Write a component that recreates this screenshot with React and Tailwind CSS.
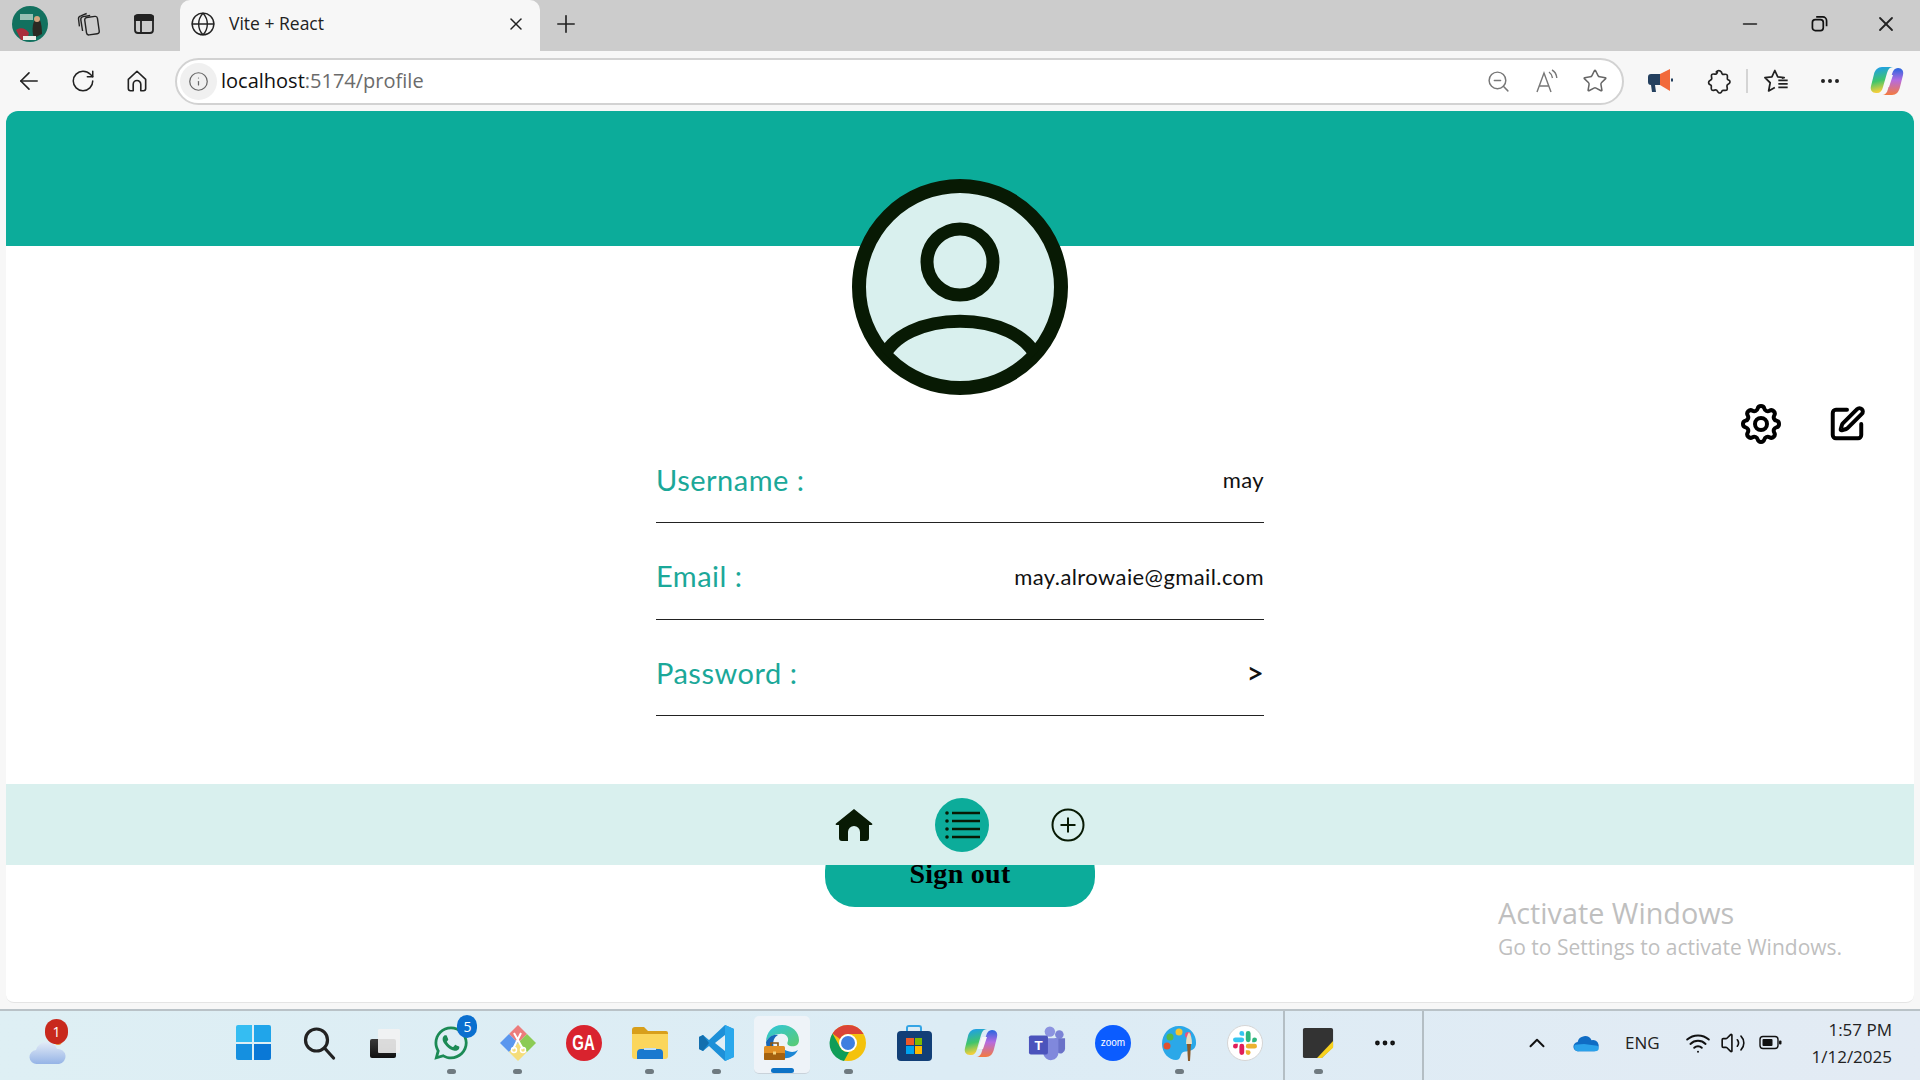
import { ArrowLeft, RotateCw, Info, ZoomOut, Star, Ellipsis, X, Plus, Minus, Globe, SquarePen, ChevronUp, Wifi, Volume2 } from "lucide-react";
import { TbSettings } from "react-icons/tb";
import { FaWhatsapp } from "react-icons/fa";

const rows = [
  { label: "Username :", value: "may", h: "h-[96px]", cls: "text-[22px] tracking-[0.4px]" },
  { label: "Email :", value: "may.alrowaie@gmail.com", h: "h-[97px]", cls: "text-[22px] tracking-[0.4px]" },
  { label: "Password :", value: ">", h: "h-[96px]", cls: "text-[30px] font-semibold" },
];

function Avatar() {
  return (
    <svg viewBox="0 0 36 36" className="w-9 h-9">
      <circle cx="18" cy="18" r="18" fill="#12715f" />
      <rect x="8" y="8" width="13" height="6" fill="#cfe3d7" opacity="0.7" />
      <path d="M22 32c-3-8-1-19 3-20s5 10 5 16z" fill="#2b2a22" />
      <circle cx="25" cy="13" r="3" fill="#d5a67f" />
      <path d="M4 24c4-3 10-2 13 3l-2 7H9z" fill="#a92d3b" />
      <rect x="11" y="30" width="13" height="4" fill="#ecece6" />
    </svg>
  );
}

function Tabs() {
  return (
    <svg viewBox="0 0 24 24" className="w-[28px] h-[28px]" fill="none" stroke="#222" strokeWidth="1.2">
      <rect x="9" y="6" width="11" height="15" rx="2" transform="rotate(-8 14 13)" />
      <path d="M6.500 18 5 8.500A2.500 2.500 0 0 1 7 5.700l6-1" />
      <path d="M3.800 14 3 7.500A2.500 2.500 0 0 1 5 5l5-2" />
    </svg>
  );
}

function VerticalTabs() {
  return (
    <svg viewBox="0 0 24 24" className="w-6 h-6" fill="none" stroke="#222" strokeWidth="1.800">
      <rect x="3" y="3" width="18" height="18" rx="3" />
      <path d="M3 4.500h18V8H3z" fill="#222" />
      <path d="M9 8v13" />
    </svg>
  );
}

function HomeOutline() {
  return (
    <svg viewBox="0 0 24 24" className="w-[26px] h-[26px]" fill="none" stroke="#222" strokeWidth="1.500" strokeLinejoin="round">
      <path d="M4 10.500 12 3l8 7.500V19a2 2 0 0 1-2 2h-2.500v-6a3.500 3.500 0 0 0-7 0v6H6a2 2 0 0 1-2-2z" />
    </svg>
  );
}

function ReadAloud() {
  return (
    <svg viewBox="0 0 26 26" className="w-[26px] h-[26px]" fill="none" stroke="#777" strokeWidth="1.400">
      <path d="M3 24 10 5l7 19M5.500 18h9" />
      <path d="M15 4c2 1.300 3 3.500 3.500 6M18 2c3 1.500 4.500 5 4.800 8" />
    </svg>
  );
}

function Megaphone() {
  return (
    <svg viewBox="0 0 28 28" className="w-7 h-7">
      <path d="M2 10a3 3 0 0 1 3-3h9v11H9l1 7H6l-1-7a3 3 0 0 1-3-3z" fill="#24405f" />
      <path d="M14 7 24 2v22l-10-6z" fill="#f26a3b" />
      <rect x="25" y="11.500" width="2" height="3" fill="#24405f" />
    </svg>
  );
}

function ExtensionIcon() {
  return (
    <svg viewBox="0 0 24 24" className="w-[27px] h-[27px]" fill="none" stroke="#222" strokeWidth="1.500" strokeLinejoin="round">
      <path d="M10 3.500c1-1.500 3.500-1.500 4.500 0 .5.800.3 1.500 1 2 .8.500 3-.5 4 .5s0 3 .5 4c.4.700 1.500.5 2 1.500.6 1.200-.2 2.500-1.500 3-.6.300-1 .7-1 1.500 0 1 .8 2.500 0 3.500-1 1-3 0-4 .5-.7.400-.5 1.500-1.500 2-1.200.6-2.500-.2-3-1.500-.3-.7-.8-1-1.500-1-1 0-2.500.8-3.500 0-1-1 0-3-.5-4-.4-.7-1.500-.6-2-1.500-.7-1.300 0-2.600 1.300-3.200.7-.3 1.200-.7 1.200-1.500 0-1-.8-2.500 0-3.500 1-1 3 0 4-.5.700-.3.500-.9 1-1.300z" />
    </svg>
  );
}

function FavoritesIcon() {
  return (
    <svg viewBox="0 0 24 24" className="w-[28px] h-[28px]" fill="none" stroke="#222" strokeWidth="1.500" strokeLinejoin="round">
      <path d="m17 9.500 2-.3-5.500-.7L11 3 8.500 8.500 2.500 9.200l4.500 4.300-1.300 7 5.300-3" />
      <path d="M14 11.500h8M14 14.500h8M14 17.500h8" />
    </svg>
  );
}

function CopilotMark({ id = "cp", size = 34 }) {
  return (
    <svg viewBox="0 0 34 34" style={{ width: size, height: size }}>
      <defs>
        <linearGradient id={`${id}A`} x1="0.4" y1="0" x2="0.6" y2="1">
          <stop offset="0" stopColor="#1f9fe8" />
          <stop offset="0.5" stopColor="#3fc56b" />
          <stop offset="0.9" stopColor="#f2cf3b" />
        </linearGradient>
        <linearGradient id={`${id}B`} x1="0.5" y1="0" x2="0.5" y2="1">
          <stop offset="0" stopColor="#2567e0" />
          <stop offset="0.45" stopColor="#b56be0" />
          <stop offset="1" stopColor="#f47a3f" />
        </linearGradient>
      </defs>
      <path d="M12 3h11c-3 0-5 2-6 6l-4 14c-1 4-3 6-6 6H6c-4 0-6-3-5-7l3-12C5 6 8 3 12 3z" fill={`url(#${id}A)`} />
      <path d="M22 31H12c3 0 5-2 6-6l4-15c1-4 3-6 6-6 4 0 6 3 5 7l-3 12c-1 5-4 8-8 8z" fill={`url(#${id}B)`} />
      <path d="M18 11h5l-4 12h-5z" fill="#f7f7f7" />
    </svg>
  );
}

function Windows() {
  return (
    <div className="grid grid-cols-2 gap-[2px] w-[35px] h-[35px]">
      <div className="bg-[#35bdf2] rounded-tl-[2px]" />
      <div className="bg-[#20a5ea] rounded-tr-[2px]" />
      <div className="bg-[#1590e0] rounded-bl-[2px]" />
      <div className="bg-[#0a78d6] rounded-br-[2px]" />
    </div>
  );
}

function Search() {
  return (
    <svg viewBox="0 0 34 34" className="w-[34px] h-[34px]" fill="none" stroke="#222" strokeWidth="3.200" strokeLinecap="round">
      <circle cx="14.500" cy="14" r="11" />
      <path d="m22.500 22 9 10" />
    </svg>
  );
}

function TaskView() {
  return (
    <svg viewBox="0 0 34 34" className="w-[34px] h-[34px]">
      <defs>
        <linearGradient id="tvA" x1="0" y1="0" x2="0" y2="1">
          <stop offset="0" stopColor="#3a3a3a" />
          <stop offset="1" stopColor="#111" />
        </linearGradient>
      </defs>
      <rect x="2" y="13" width="26" height="19" rx="2" fill="url(#tvA)" />
      <rect x="10" y="3" width="22" height="24" rx="1" fill="#f2f2f2" opacity="0.88" />
    </svg>
  );
}

function Kite() {
  return (
    <svg viewBox="0 0 38 38" className="w-[38px] h-[38px]">
      <path d="M19 1 28 10 19 19 10 10z" fill="#ec7c7c" />
      <path d="M10 10 19 19 10 28 1 19z" fill="#5b97ee" />
      <path d="M28 10 37 19 28 28 19 19z" fill="#8ccb55" />
      <path d="M19 19 28 28 19 37 10 28z" fill="#f5dd7a" />
      <path d="M15 9 24 25M22 9l-8 16" stroke="#fff" strokeWidth="2" />
      <circle cx="15" cy="26" r="2.500" fill="none" stroke="#fff" strokeWidth="1.500" />
      <circle cx="24" cy="26" r="2.500" fill="none" stroke="#fff" strokeWidth="1.500" />
    </svg>
  );
}

function Folder() {
  return (
    <svg viewBox="0 0 38 36" className="w-[38px] h-[36px]">
      <path d="M1 5a3 3 0 0 1 3-3h9l4 4h18a2 2 0 0 1 2 2v4H1z" fill="#d89f1b" />
      <path d="M1 9h36v22a3 3 0 0 1-3 3H4a3 3 0 0 1-3-3z" fill="#fbd65c" />
      <path d="M6 34v-6a4 4 0 0 1 4-4h18a4 4 0 0 1 4 4v6z" fill="#1a79cf" />
      <rect x="13" y="23" width="12" height="2" fill="#bfe0f7" />
    </svg>
  );
}

function VSCode() {
  return (
    <svg viewBox="0 0 38 38" className="w-[38px] h-[38px]">
      <path d="M28 1 37 5v28l-9 4L12 22l-6 5-4-2V13l4-2 6 5z" fill="#1d90d8" />
      <path d="M28 1 37 5v28l-9 4z" fill="#2aa8ec" />
      <path d="M28 11 18 19l10 8z" fill="#e2eff6" />
      <path d="M2 13v12l4 2 6-8-6-8z" fill="#146fae" />
    </svg>
  );
}

function Edge() {
  return (
    <svg viewBox="0 0 38 38" className="w-[38px] h-[38px]">
      <defs>
        <linearGradient id="edA" x1="0" y1="0" x2="1" y2="1">
          <stop offset="0" stopColor="#2dc6e0" />
          <stop offset="1" stopColor="#5ccb6e" />
        </linearGradient>
      </defs>
      <path d="M3 18C3 8 10 1 19 1c10 0 17 7 17 15 0 6-5 7-9 6-3-1-3-3-2-5 1-4-3-8-8-7-6 0-12 3-14 8z" fill="url(#edA)" />
      <path d="M3 18c3-6 8-8 12-7-4 2-6 7-4 13 1 4 4 8 9 10-9 1-17-6-17-16z" fill="#1866b8" />
      <path d="M20 34c6 1 12-2 15-8-4 3-9 2-13 0-3 1-4 6-2 8z" fill="#1c86d4" />
      <rect x="1" y="22" width="21" height="14" rx="1.500" fill="#e08f25" />
      <rect x="1" y="29" width="21" height="7" rx="1" fill="#a4620f" />
      <path d="M8 22v-3h7v3" fill="none" stroke="#8a5510" strokeWidth="1.600" />
      <rect x="10" y="27.500" width="3" height="3" fill="#f3d27a" />
    </svg>
  );
}

function Chrome() {
  return (
    <svg viewBox="0 0 38 38" className="w-[38px] h-[38px]">
      <circle cx="19" cy="19" r="18" fill="#f4c20d" />
      <path d="M19 1a18 18 0 0 1 15.600 9H19a9 9 0 0 0-8 5L3.500 9.500A18 18 0 0 1 19 1z" fill="#db4437" />
      <path d="M3.500 9.500 11 23a9 9 0 0 0 9 5l-5 9A18 18 0 0 1 3.500 9.500z" fill="#0f9d58" />
      <circle cx="19" cy="19" r="9" fill="#fff" />
      <circle cx="19" cy="19" r="7" fill="#3f7fe0" />
    </svg>
  );
}

function Store() {
  return (
    <div className="flex flex-col items-center">
      <div className="w-[16px] h-[6px] border-2 border-b-0 border-[#35a5e5] rounded-t-[3px]" />
      <div className="w-[35px] h-[30px] rounded-[4px] bg-[#123f77] flex items-center justify-center">
        <div className="grid grid-cols-2 gap-[1px] w-[16px] h-[16px]">
          <div className="bg-[#ef5a28]" />
          <div className="bg-[#7fba00]" />
          <div className="bg-[#00a4ef]" />
          <div className="bg-[#ffb900]" />
        </div>
      </div>
    </div>
  );
}

function Teams() {
  return (
    <svg viewBox="0 0 40 36" className="w-[38px] h-[36px]">
      <circle cx="33" cy="9" r="4.500" fill="#7b83d6" />
      <circle cx="23" cy="6" r="5.500" fill="#8c93e0" />
      <path d="M28 13h11v11a5 5 0 0 1-8 4z" fill="#6a72c8" />
      <path d="M12 13h20v14a8 8 0 0 1-16 2z" fill="#8088dc" />
      <rect x="1" y="10" width="20" height="20" rx="2" fill="#4b53bc" />
      <text x="11" y="25" textAnchor="middle" fontFamily="'Liberation Sans',sans-serif" fontWeight="700" fontSize="14" fill="#fff">T</text>
    </svg>
  );
}

function Zoom() {
  return (
    <div className="w-[36px] h-[36px] rounded-full bg-[#0b5cff] flex items-center justify-center text-white text-[10px] font-['Liberation_Sans',sans-serif]">zoom</div>
  );
}

function Paint() {
  return (
    <svg viewBox="0 0 38 38" className="w-[38px] h-[38px]">
      <path d="M19 2C9 2 2 10 2 20c0 9 7 16 14 16 5 0 4-5 6-7 3-3 13 0 14-9C37 10 29 2 19 2z" fill="#2ba8e8" />
      <circle cx="19" cy="8" r="3.500" fill="#f4c430" />
      <circle cx="10" cy="13" r="3.500" fill="#57b947" />
      <circle cx="7" cy="22" r="3.500" fill="#e2502f" />
      <circle cx="28" cy="11" r="3" fill="#e75480" />
      <path d="M27 20h4l-1 17h-2z" fill="#8a5a2b" />
      <path d="M26 20c0-5 1-9 3-12 2 3 3 7 3 12z" fill="#e8dcc0" />
    </svg>
  );
}

function Slack() {
  return (
    <div className="w-[36px] h-[36px] rounded-full bg-white border border-[#d5d5d5] flex items-center justify-center">
      <svg viewBox="0 0 54 54" className="w-[24px] h-[24px]">
        <path d="M19.700 0a5.400 5.400 0 1 0 0 10.800h5.400V5.400A5.400 5.400 0 0 0 19.700 0zm0 14.400H5.400a5.400 5.400 0 1 0 0 10.800h14.300a5.400 5.400 0 1 0 0-10.800z" fill="#36c5f0" />
        <path d="M54 19.800a5.400 5.400 0 1 0-10.800 0v5.400h5.400a5.400 5.400 0 0 0 5.400-5.400zm-14.400 0V5.400a5.400 5.400 0 1 0-10.800 0v14.400a5.400 5.400 0 1 0 10.800 0z" fill="#2eb67d" />
        <path d="M34.200 54a5.400 5.400 0 1 0 0-10.800h-5.400v5.400a5.400 5.400 0 0 0 5.400 5.400zm0-14.400h14.400a5.400 5.400 0 1 0 0-10.800H34.200a5.400 5.400 0 1 0 0 10.800z" fill="#ecb22e" />
        <path d="M0 34.200a5.400 5.400 0 1 0 10.800 0v-5.400H5.400A5.400 5.400 0 0 0 0 34.200zm14.400 0v14.400a5.400 5.400 0 1 0 10.800 0V34.200a5.400 5.400 0 1 0-10.800 0z" fill="#e01e5a" />
      </svg>
    </div>
  );
}

function Sticky() {
  return (
    <svg viewBox="0 0 34 34" className="w-[34px] h-[32px]">
      <path d="M1 3a2 2 0 0 1 2-2h28a2 2 0 0 1 2 2v18L21 33H3a2 2 0 0 1-2-2z" fill="#333" />
      <path d="M33 15v7L21 33h-5z" fill="#f8d21f" />
    </svg>
  );
}

function WeatherCloud() {
  return (
    <div className="relative w-[40px] h-[44px]">
      <svg viewBox="0 0 40 30" className="absolute bottom-0 left-0 w-[40px] h-[30px]">
        <defs>
          <linearGradient id="clA" x1="0" y1="0" x2="0" y2="1">
            <stop offset="0" stopColor="#e3ebf7" />
            <stop offset="1" stopColor="#95b4e6" />
          </linearGradient>
        </defs>
        <circle cx="30" cy="6" r="4" fill="#ea8a2a" />
        <path d="M9 29a7 7 0 0 1-1-14 11 11 0 0 1 21-1 7.500 7.500 0 0 1 2 15z" fill="url(#clA)" />
      </svg>
      <div className="absolute top-[-2px] left-[17px] w-[23px] h-[25px] rounded-full bg-[#c8291d] text-white text-[14px] flex items-center justify-center">1</div>
    </div>
  );
}

function OneDrive() {
  return (
    <svg viewBox="0 0 28 18" className="w-[26px] h-[18px]">
      <path d="M6 18a5 5 0 0 1-1-10 8 8 0 0 1 15-2 6 6 0 0 1 3 12z" fill="#0f6cc4" />
      <path d="M6 18c-4 0-6-4-4-7l10-1 14 2c3 2 2 6-2 6z" fill="#2aa1ea" />
    </svg>
  );
}

function Battery() {
  return (
    <svg viewBox="0 0 24 14" className="w-[24px] h-[15px]">
      <rect x="1" y="1" width="18" height="12" rx="3" fill="none" stroke="#111" strokeWidth="1.400" />
      <rect x="3.500" y="3.500" width="10" height="7" rx="1" fill="#111" />
      <rect x="20" y="5" width="2.500" height="4" rx="1" fill="#111" />
    </svg>
  );
}

function TaskIcon({ children, dot, active, badge }) {
  return (
    <div className="relative w-[66.15px] h-[70px] shrink-0 flex items-center justify-center">
      {active && <div className="absolute inset-x-[5px] top-[5px] bottom-[7px] rounded-[5px] bg-[#eef3f8] border-b border-[#c9d2da]" />}
      <div className="relative mb-[7px]">
        {children}
        {badge && <div className="absolute -top-[9px] -right-[7px] w-[20px] h-[23px] rounded-full bg-[#0a6fcf] text-white text-[14px] flex items-center justify-center">{badge}</div>}
      </div>
      {dot && <div className="absolute bottom-[7px] w-[9px] h-[5px] rounded-full bg-[#6f7a80]" />}
      {active && <div className="absolute bottom-[8px] w-[23px] h-[5px] rounded-full bg-[#0c72c6]" />}
    </div>
  );
}

function HomeIcon() {
  return (
    <svg viewBox="0 0 38 34" className="w-[38px] h-[34px]">
      <path d="M19 1 37 15.500c.8.700.3 1.500-.5 1.500H34v13a3 3 0 0 1-3 3h-6V24a6 6 0 0 0-12 0v9H7a3 3 0 0 1-3-3V17H1.500c-.8 0-1.300-.8-.5-1.500z" fill="#081a04" />
    </svg>
  );
}

function ListIcon() {
  return (
    <svg viewBox="0 0 36 30" className="w-[36px] h-[30px]" fill="none" stroke="#081a04" strokeWidth="2.400">
      <circle cx="3" cy="3" r="1.800" fill="#081a04" stroke="none" />
      <circle cx="3" cy="11" r="1.800" fill="#081a04" stroke="none" />
      <circle cx="3" cy="19" r="1.800" fill="#081a04" stroke="none" />
      <circle cx="3" cy="27" r="1.800" fill="#081a04" stroke="none" />
      <path d="M8 3h28M8 11h28M8 19h28M8 27h28" />
    </svg>
  );
}

function AddIcon() {
  return (
    <svg viewBox="0 0 34 34" className="w-[34px] h-[34px]" fill="none" stroke="#081a04" strokeWidth="2">
      <circle cx="17" cy="17" r="15.500" />
      <path d="M17 9.500v15M9.500 17h15" />
    </svg>
  );
}

function ProfileAvatar() {
  return (
    <svg viewBox="0 0 216 216" className="w-[216px] h-[216px]">
      <defs>
        <clipPath id="avClip">
          <circle cx="108" cy="108" r="101" />
        </clipPath>
      </defs>
      <circle cx="108" cy="108" r="101" fill="#d9f0ee" stroke="#081a04" strokeWidth="14" />
      <circle cx="108" cy="83" r="33" fill="none" stroke="#081a04" strokeWidth="13" />
      <path d="M30 182C48 129 168 129 186 182" fill="none" stroke="#081a04" strokeWidth="13" clipPath="url(#avClip)" />
    </svg>
  );
}

export default function App() {
  return (
    <div className="relative w-[1920px] h-[1080px] overflow-hidden flex flex-col bg-[#f7f7f7] font-['Open_Sans',sans-serif]">
      {/* tab strip */}
      <div className="h-[51px] shrink-0 bg-[#cccccc] flex items-center text-[#222]">
        <div className="w-[58px] pl-[12px] mb-[4px] flex items-center"><Avatar /></div>
        <div className="w-[62px] mb-[4px] flex justify-center"><Tabs /></div>
        <div className="w-[48px] mb-[4px] flex justify-center"><VerticalTabs /></div>
        <div className="w-[12px]" />
        <div className="w-[360px] h-[51px] pb-[4px] rounded-t-[10px] bg-[#f7f7f7] flex items-center pl-[10px] pr-[14px]">
          <Globe size={26} strokeWidth={1.3} color="#222" />
          <span className="ml-[13px] text-[17.5px] flex-1">Vite + React</span>
          <X size={20} strokeWidth={1.8} />
        </div>
        <div className="ml-[12px] mb-[4px] w-[28px] flex justify-center"><Plus size={28} strokeWidth={1.4} /></div>
        <div className="flex-1" />
        <div className="w-[68px] mb-[4px] mr-[2px] flex justify-center"><Minus size={22} strokeWidth={1.8} /></div>
        <div className="w-[66px] mb-[4px] flex justify-center">
          <svg viewBox="0 0 18 18" className="w-[17px] h-[17px]" fill="none" stroke="#111" strokeWidth="1.800">
            <rect x="1.500" y="5" width="11.500" height="11.500" rx="3" />
            <path d="M5.500 2h7A4 4 0 0 1 16.500 6v6" />
          </svg>
        </div>
        <div className="w-[68px] mb-[4px] flex justify-center"><X size={24} strokeWidth={1.8} /></div>
      </div>

      {/* toolbar */}
      <div className="h-[60px] flex items-center text-[#222] shrink-0">
        <div className="w-[58px] flex justify-center"><ArrowLeft size={28} strokeWidth={1.4} /></div>
        <div className="w-[50px] flex justify-center"><RotateCw size={26} strokeWidth={1.4} /></div>
        <div className="w-[58px] flex justify-center"><HomeOutline /></div>
        <div className="ml-[9px] w-[1449px] h-[47px] rounded-full border-2 border-[#d2d2d2] bg-white flex items-center pl-[3px] pr-[4px]">
          <div className="w-[37px] h-[37px] rounded-full bg-[#f0f0f0] flex items-center justify-center"><Info size={21} strokeWidth={1.4} color="#666" /></div>
          <span className="ml-[4px] text-[20px] text-[#111] flex-1">localhost<span className="text-[#6b6b6b]">:5174/profile</span></span>
          <div className="w-[48px] flex justify-center"><ZoomOut size={25} strokeWidth={1.4} color="#777" /></div>
          <div className="w-[50px] flex justify-center"><ReadAloud /></div>
          <div className="w-[46px] flex justify-center"><Star size={26} strokeWidth={1.4} color="#666" /></div>
        </div>
        <div className="w-[72px] flex justify-center"><Megaphone /></div>
        <div className="w-[44px] flex justify-center"><ExtensionIcon /></div>
        <div className="w-[2px] h-[24px] ml-[6px] bg-[#d4d4d4]" />
        <div className="w-[56px] flex justify-center"><FavoritesIcon /></div>
        <div className="w-[52px] flex justify-center"><Ellipsis size={24} strokeWidth={2} /></div>
        <div className="w-[62px] flex justify-center"><CopilotMark id="cpTop" /></div>
      </div>

      {/* page */}
      <div className="h-[892px] mx-[6px] rounded-t-[12px] rounded-b-[8px] bg-white border-b border-[#e4e4e4] overflow-hidden flex flex-col shrink-0">
        <div className="h-[135px] shrink-0 bg-[#0cac9a]" />
        <div className="-mt-[67px] self-center"><ProfileAvatar /></div>

        <div className="grid grid-cols-[1fr_608px_1fr]">
          <div />
          <div className="mt-[32px]">
            {rows.map((row) => (
              <div key={row.label} className={`${row.h} pt-[10px] border-b border-[#222] flex items-center justify-between font-['Lato',sans-serif]`}>
                <span className="text-[29px] tracking-[0.5px] text-[#1ba899]">{row.label}</span>
                <span className={`${row.cls} text-[#111]`}>{row.value}</span>
              </div>
            ))}
          </div>
          <div className="pt-[5px] pr-[48px] flex justify-end items-center self-start gap-[43px]">
            <TbSettings size={48} strokeWidth={2} color="#000" />
            <SquarePen size={38} strokeWidth={2.5} color="#000" />
          </div>
        </div>

        <div className="relative z-10 mt-[68px] h-[81px] shrink-0 bg-[#d9f0ee] flex items-center justify-center">
          <div className="w-[162px] flex justify-center"><HomeIcon /></div>
          <div className="w-[54px] h-[54px] rounded-full bg-[#0cac9a] flex items-center justify-center"><ListIcon /></div>
          <div className="w-[158px] flex justify-center"><AddIcon /></div>
        </div>
        <button className="-mt-[24px] self-center w-[270px] h-[66px] shrink-0 rounded-[30px] bg-[#0cac9a] font-['Liberation_Serif',serif] font-bold text-[28px] tracking-[0.3px] text-black">Sign out</button>
      </div>

      {/* taskbar */}
      <div className="mt-[6px] h-[72px] shrink-0 border-t-2 border-[#b9c2c7] bg-gradient-to-r from-[#deeff4] via-[#dcecf5] to-[#e3ebf4] flex items-center">
        <div className="w-[220px] pl-[28px] mb-[7px]"><WeatherCloud /></div>
        <TaskIcon><Windows /></TaskIcon>
        <TaskIcon><Search /></TaskIcon>
        <TaskIcon><TaskView /></TaskIcon>
        <TaskIcon dot badge="5"><FaWhatsapp size={38} color="#1b8a55" /></TaskIcon>
        <TaskIcon dot><Kite /></TaskIcon>
        <TaskIcon>
          <div className="w-[36px] h-[36px] rounded-full bg-[#d9232e] flex items-center justify-center text-white font-bold text-[22px] font-['Liberation_Sans',sans-serif]"><span className="scale-x-[0.68]">GA</span></div>
        </TaskIcon>
        <TaskIcon dot><Folder /></TaskIcon>
        <TaskIcon dot><VSCode /></TaskIcon>
        <TaskIcon active><Edge /></TaskIcon>
        <TaskIcon dot><Chrome /></TaskIcon>
        <TaskIcon><Store /></TaskIcon>
        <TaskIcon><CopilotMark id="cpBar" /></TaskIcon>
        <TaskIcon><Teams /></TaskIcon>
        <TaskIcon><Zoom /></TaskIcon>
        <TaskIcon dot><Paint /></TaskIcon>
        <TaskIcon><Slack /></TaskIcon>
        <div className="ml-[5px] w-[2px] h-[70px] bg-[#b4bec4]" />
        <TaskIcon dot><Sticky /></TaskIcon>
        <div className="w-[68px] mb-[7px] flex justify-center"><Ellipsis size={26} strokeWidth={2.4} color="#111" /></div>
        <div className="w-[2px] h-[70px] ml-[3px] bg-[#b4bec4]" />
        <div className="w-[100px]" />
        <div className="mb-[7px]"><ChevronUp size={26} strokeWidth={1.8} color="#111" /></div>
        <div className="w-[72px] mb-[7px] flex justify-center"><OneDrive /></div>
        <div className="w-[40px] mb-[7px] text-center text-[17px] text-[#222]">ENG</div>
        <div className="w-[50px] ml-[11px] mb-[7px] flex justify-center"><Wifi size={26} strokeWidth={1.8} color="#111" /></div>
        <div className="w-[20px] mb-[7px] flex justify-center"><Volume2 size={26} strokeWidth={1.5} color="#111" className="shrink-0" /></div>
        <div className="w-[56px] mb-[7px] flex justify-center"><Battery /></div>
        <div className="flex-1 pr-[28px] mb-[7px] text-right text-[17px] leading-[27px] text-[#222]">
          <div>1:57 PM</div>
          <div>1/12/2025</div>
        </div>
      </div>

      {/* watermark */}
      <div className="absolute left-[1498px] top-[893px] text-[#bfbfbf]">
        <div className="text-[28.8px] leading-[40px]">Activate Windows</div>
        <div className="text-[21px] leading-[28px]">Go to Settings to activate Windows.</div>
      </div>
    </div>
  );
}
